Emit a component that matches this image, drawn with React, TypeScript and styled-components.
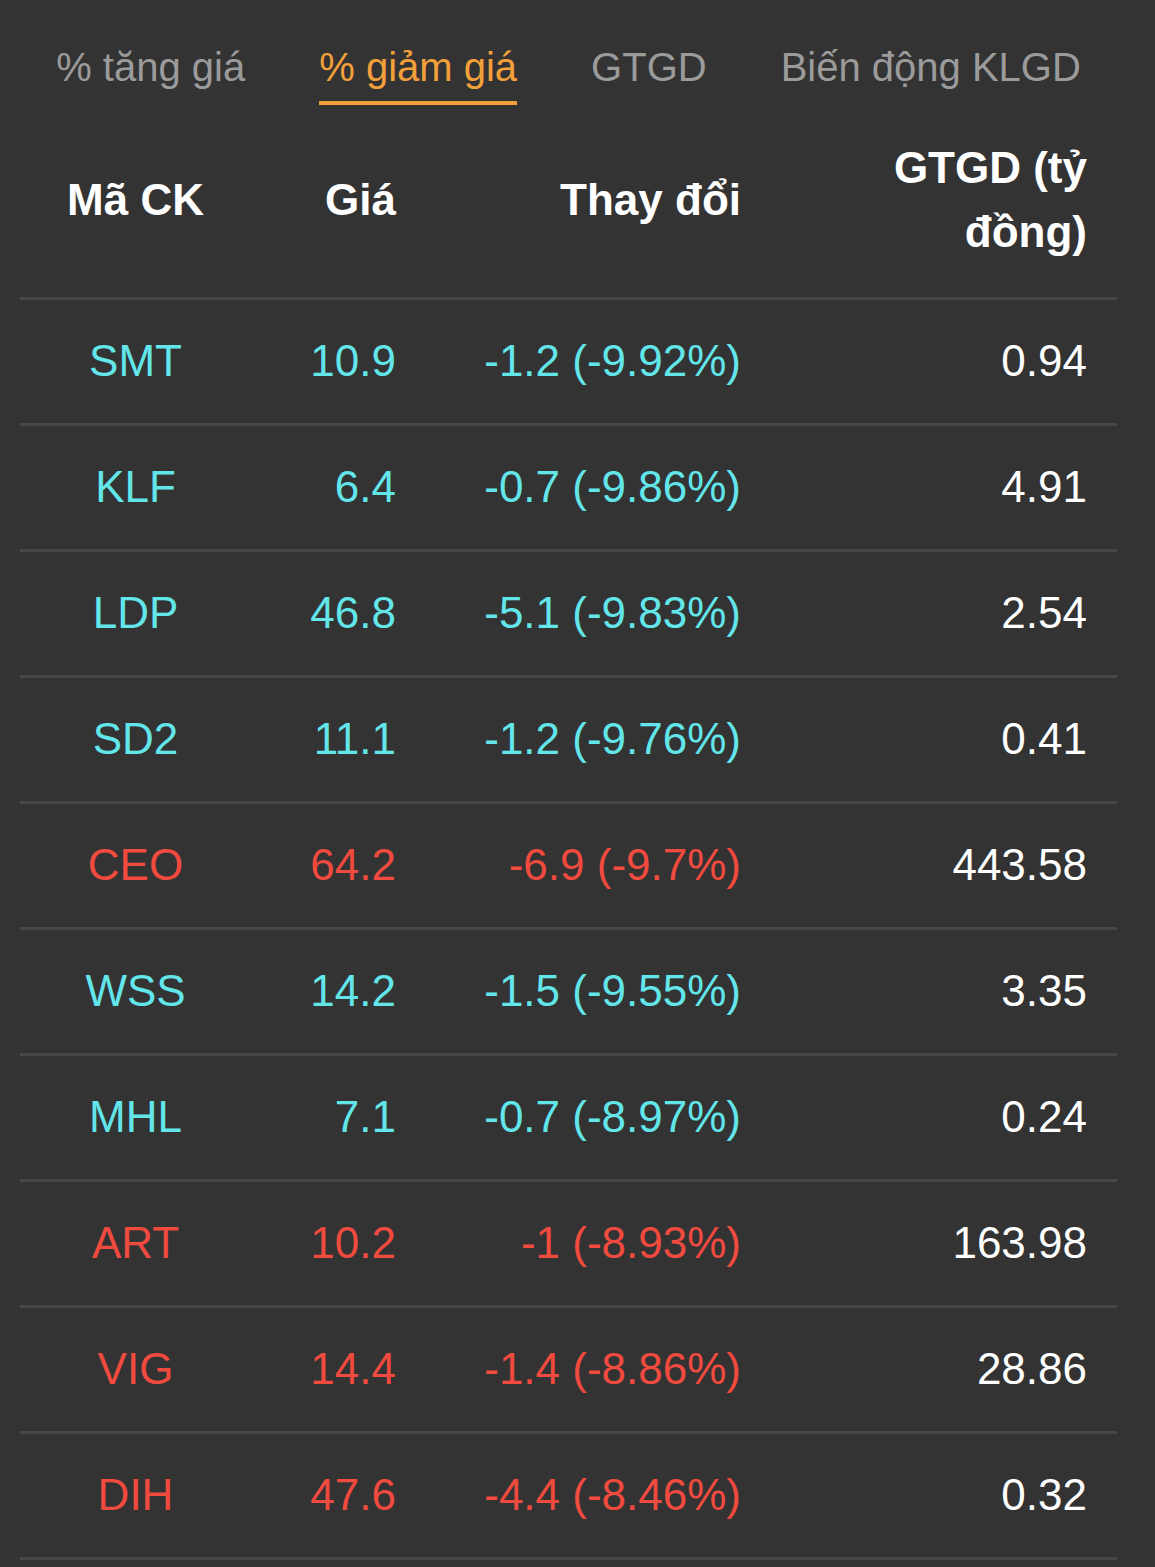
import * as React from 'react';
import styled, { createGlobalStyle } from 'styled-components';

const GlobalStyle = createGlobalStyle`
    html, body {
        margin: 0;
        padding: 0;
        background-color: #333333;
    }
    body {
        font-family: "Liberation Sans", Arial, Helvetica, sans-serif;
        -webkit-font-smoothing: antialiased;
    }
`;

const Board = styled.div`
    background-color: #333333;
    min-height: 1567px;
    padding: 0 38px 0 20px;
    box-sizing: border-box;
`;

const Tabs = styled.nav`
    display: flex;
    justify-content: center;
    gap: 74px;
    padding-top: 43px;
`;

type TabProps = {
    active?: boolean;
};

const Tab = styled.div<TabProps>`
    font-size: 40px;
    line-height: 48px;
    padding-bottom: 10px;
    color: ${(p) => (p.active ? '#f3a03a' : '#9b9b9b')};
    border-bottom: 4px solid ${(p) => (p.active ? '#f3a03a' : 'transparent')};
    white-space: nowrap;
    cursor: pointer;
`;

const Row = styled.div<{ head?: boolean }>`
    display: grid;
    grid-template-columns: 231px 175px 345px 346px;
    align-items: center;
    height: ${(p) => (p.head ? '192px' : '123px')};
    border-bottom: 3px solid #474747;
`;

type CellProps = {
    center?: boolean;
    tone?: 'up' | 'down' | 'plain';
};

const toneColor = (tone?: string) => {
    if (tone === 'up') return '#62e6ea';
    if (tone === 'down') return '#f14a3f';
    return '#ffffff';
};

const HeadCell = styled.div<CellProps>`
    padding: 0 30px 3px;
    font-size: 44px;
    font-weight: 700;
    line-height: 64px;
    color: #ffffff;
    text-align: ${(p) => (p.center ? 'center' : 'right')};
`;

const Cell = styled.div<CellProps>`
    padding: 0 30px;
    font-size: 44px;
    line-height: 1.2;
    color: ${(p) => toneColor(p.tone)};
    text-align: ${(p) => (p.center ? 'center' : 'right')};
    white-space: nowrap;
`;

type Stock = {
    code: string;
    price: string;
    change: string;
    value: string;
    red?: boolean;
};

const stocks: Stock[] = [
    { code: 'SMT', price: '10.9', change: '-1.2 (-9.92%)', value: '0.94' },
    { code: 'KLF', price: '6.4', change: '-0.7 (-9.86%)', value: '4.91' },
    { code: 'LDP', price: '46.8', change: '-5.1 (-9.83%)', value: '2.54' },
    { code: 'SD2', price: '11.1', change: '-1.2 (-9.76%)', value: '0.41' },
    { code: 'CEO', price: '64.2', change: '-6.9 (-9.7%)', value: '443.58', red: true },
    { code: 'WSS', price: '14.2', change: '-1.5 (-9.55%)', value: '3.35' },
    { code: 'MHL', price: '7.1', change: '-0.7 (-8.97%)', value: '0.24' },
    { code: 'ART', price: '10.2', change: '-1 (-8.93%)', value: '163.98', red: true },
    { code: 'VIG', price: '14.4', change: '-1.4 (-8.86%)', value: '28.86', red: true },
    { code: 'DIH', price: '47.6', change: '-4.4 (-8.46%)', value: '0.32', red: true },
];

const tabs = ['% tăng giá', '% giảm giá', 'GTGD', 'Biến động KLGD'];

const App: React.FC = () => {
    const [active, setActive] = React.useState(1);

    return (
        <>
            <GlobalStyle />
            <Board>
                <Tabs>
                    {tabs.map((t, i) => (
                        <Tab key={t} active={i === active} onClick={() => setActive(i)}>
                            {t}
                        </Tab>
                    ))}
                </Tabs>

                <Row head>
                    <HeadCell center>Mã CK</HeadCell>
                    <HeadCell>Giá</HeadCell>
                    <HeadCell>Thay đổi</HeadCell>
                    <HeadCell>GTGD (tỷ đồng)</HeadCell>
                </Row>

                {stocks.map((s) => {
                    const tone = s.red ? 'down' : 'up';
                    return (
                        <Row key={s.code}>
                            <Cell center tone={tone}>{s.code}</Cell>
                            <Cell tone={tone}>{s.price}</Cell>
                            <Cell tone={tone}>{s.change}</Cell>
                            <Cell tone="plain">{s.value}</Cell>
                        </Row>
                    );
                })}
            </Board>
        </>
    );
};

export default App;
